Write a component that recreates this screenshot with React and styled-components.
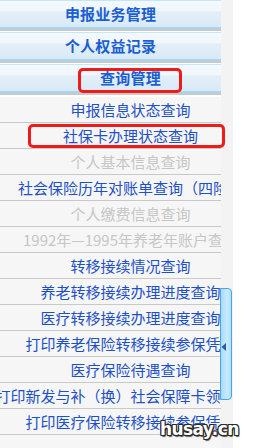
import React from 'react';
import styled, { createGlobalStyle } from 'styled-components';

const GlobalStyle = createGlobalStyle`
    html, body {
        margin: 0;
        padding: 0;
        background: #ffffff;
    }
    body {
        font-family: "Noto Sans CJK SC", "Noto Sans", sans-serif;
    }
`;

const Page = styled.div`
    position: relative;
    display: flex;
    width: 253px;
    height: 448px;
    overflow: hidden;
    background: #ffffff;
`;

const Panel = styled.div`
    width: 221px;
    flex: none;
    display: flex;
    flex-direction: column;
    overflow: hidden;
    background: #f6f6f6;
`;

const Strip = styled.div`
    width: 12px;
    flex: none;
    background: #f3f3f3;
`;

const Header = styled.div`
    flex: none;
    height: ${(p) => p.$height}px;
    box-sizing: border-box;
    display: flex;
    flex-direction: column;
    background: #ffffff;

    .header-body {
        height: 27px;
        display: flex;
        align-items: center;
        justify-content: center;
        padding-left: ${(p) => (p.$shift ? 40 : 0)}px;
        border-top: 1px solid #c4e6f9;
        box-sizing: border-box;
        background: linear-gradient(
            to bottom,
            #f4f9fe 0%,
            #f1f7fc 38%,
            #e2eff9 42%,
            #d9eaf7 100%
        );
        color: #1b5ed3;
        font-weight: 700;
        font-size: 15px;
        line-height: 20px;
        letter-spacing: 0.2px;
    }

    .header-line {
        height: 2px;
        background: #a2d6f4;
    }

    .header-gap {
        height: 2px;
        background: #c9c9c9;
    }
`;

const SubList = styled.div`
    width: 261px;
    display: flex;
    flex-direction: column;
`;

const SubItem = styled.div`
    height: 25px;
    border-bottom: 1px solid #c9c9c9;
    display: flex;
    align-items: center;
    justify-content: center;
    white-space: nowrap;
    font-size: 15px;
    line-height: 20px;
    color: ${(p) => (p.$disabled ? '#c6c6c6' : '#2150c6')};
`;

const Mark = styled.div`
    position: absolute;
    left: ${(p) => p.$x}px;
    top: ${(p) => p.$y}px;
    width: ${(p) => p.$w}px;
    height: ${(p) => p.$h}px;
    box-sizing: border-box;
    border: 3px solid #ef1b1b;
    border-radius: 5px;
    pointer-events: none;
`;

const ScrollTab = styled.div`
    position: absolute;
    left: 220px;
    top: 288px;
    width: 12px;
    height: 112px;
    box-sizing: border-box;
    border: 1px solid #4ea3e6;
    border-radius: 0 4px 4px 0;
    background: linear-gradient(to right, #a6dbfb, #c8ebfd 60%, #b2e0fb);

    svg {
        position: absolute;
        left: 0;
        top: 54px;
    }
`;

const Watermark = styled.div`
    position: absolute;
    left: 160px;
    top: 419px;
    font-family: "DejaVu Sans", sans-serif;
    font-weight: 700;
    font-size: 17px;
    letter-spacing: -0.6px;
    color: #ffffff;
    text-shadow:
        -1px -1px 0 #2a2a2a, 1px -1px 0 #2a2a2a,
        -1px 1px 0 #2a2a2a, 1px 1px 0 #2a2a2a,
        0 -1px 0 #2a2a2a, 0 1px 0 #2a2a2a,
        -1px 0 0 #2a2a2a, 1px 0 0 #2a2a2a,
        1px 2px 1px #555555;
`;

const headers = [
    { label: '申报业务管理', height: 32 },
    { label: '个人权益记录', height: 32 },
    { label: '查询管理', height: 33, shift: true },
];

const items = [
    { text: '申报信息状态查询' },
    { text: '社保卡办理状态查询' },
    { text: '个人基本信息查询', disabled: true },
    { text: '社会保险历年对账单查询（四险）' },
    { text: '个人缴费信息查询', disabled: true },
    { text: '1992年—1995年养老年账户查询', disabled: true },
    { text: '转移接续情况查询' },
    { text: '养老转移接续办理进度查询' },
    { text: '医疗转移接续办理进度查询' },
    { text: '打印养老保险转移接续参保凭证' },
    { text: '医疗保险待遇查询' },
    { text: '打印新发与补（换）社会保障卡领取凭证' },
    { text: '打印医疗保险转移接续参保凭证' },
];

export default function App() {
    return (
        <>
            <GlobalStyle />
            <Page>
                <Panel>
                    {headers.map((h) => (
                        <Header key={h.label} $height={h.height} $shift={h.shift}>
                            <div className="header-body">{h.label}</div>
                            <div className="header-line" />
                            <div className="header-gap" />
                        </Header>
                    ))}
                    <SubList>
                        {items.map((item) => (
                            <SubItem key={item.text} $disabled={item.disabled}>
                                {item.text}
                            </SubItem>
                        ))}
                    </SubList>
                </Panel>
                <Strip />
                <ScrollTab>
                    <svg width="6" height="8" viewBox="0 0 6 8">
                        <path d="M5 0 L0.5 4 L5 8 Z" fill="#2d5aa6" />
                    </svg>
                </ScrollTab>
                <Mark $x={78} $y={68} $w={104} $h={25} />
                <Mark $x={28} $y={124} $w={197} $h={24} />
                <Watermark>husay.cn</Watermark>
            </Page>
        </>
    );
}
